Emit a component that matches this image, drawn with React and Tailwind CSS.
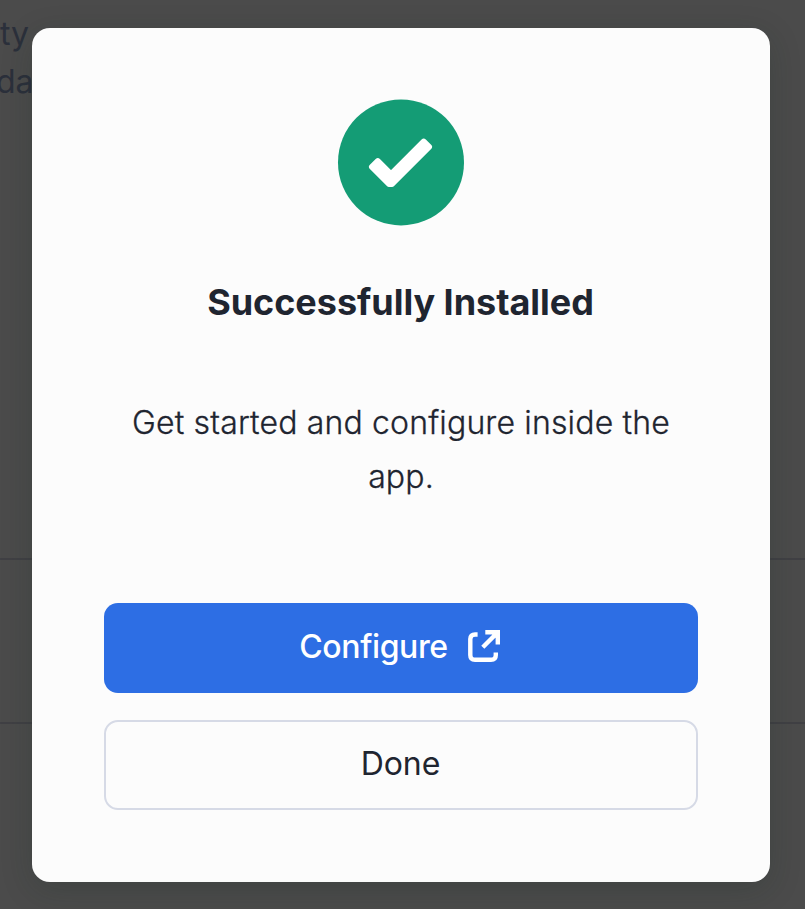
function CheckCircle() {
  return (
    <svg viewBox="0 0 126 126" className="size-[126px] overflow-visible" aria-hidden="true">
      <circle cx="63" cy="63.4" r="63" fill="#149c75" />
      <path d="M85.7 42.6L91 47.9L54 84.9H51L34 67.9L39.8 62.1L53 75.4Z" fill="#ffffff" stroke="#ffffff" strokeWidth="6" strokeLinejoin="round" />
    </svg>
  );
}

function ExternalIcon() {
  return (
    <svg viewBox="0 0 32 32" className="mb-[2px] size-8" fill="none" stroke="currentColor" strokeWidth="4.4" aria-hidden="true">
      <path d="M9.6 4.5H7Q2.3 4.5 2.3 9V25Q2.3 29.8 7 29.8H23Q27.8 29.8 27.8 25V22.5" />
      <path d="M17.3 2.2H29.8V14.5M29.8 2.2L14.8 17.2" />
      <path d="M22 2H30V10Z" fill="currentColor" stroke="none" />
    </svg>
  );
}

export default function App() {
  return (
    <div className="relative h-[909px] w-[805px] overflow-hidden bg-[#4b4b4b] font-[Inter,sans-serif] text-[#1f2530]">
      <div className="flex h-full flex-col text-[32px] leading-12 text-[#2b303b]">
        <div className="h-[558px] pt-[10px]">
          <p className="w-[25px] whitespace-nowrap text-right">ty</p>
          <p className="-ml-1 whitespace-nowrap">da</p>
        </div>
        <div className="h-[166px] border-y-2 border-[#404044]" />
      </div>
      <div role="dialog" className="absolute left-8 top-7 flex h-[854px] w-[738px] flex-col items-center rounded-[18px] bg-[#fcfcfc] px-[72px] pt-[71px] shadow-[0_8px_32px_rgba(20,40,30,0.2)]">
        <CheckCircle />
        <h1 className="mt-[53px] pr-px text-[36px] font-bold leading-[48px] tracking-[-0.04px]">Successfully Installed</h1>
        <p className="mt-[70px] w-[560px] text-center text-[32px] font-light leading-[54px] tracking-[0.15px] [-webkit-text-stroke:0.3px_#1f2530]">Get started and configure inside the app.</p>
        <button className="mt-[99px] flex h-[90px] w-full items-center justify-center gap-5 rounded-[14px] bg-[#2d6ee4] pb-[2px] pr-[3px] text-[32px] font-medium tracking-[-0.4px] text-white">
          Configure <ExternalIcon />
        </button>
        <button className="mt-[27px] h-[90px] w-full rounded-[14px] border-2 border-[#d6dae6] pb-[2px] pr-px text-[32px] tracking-[-0.1px]">Done</button>
      </div>
    </div>
  );
}
